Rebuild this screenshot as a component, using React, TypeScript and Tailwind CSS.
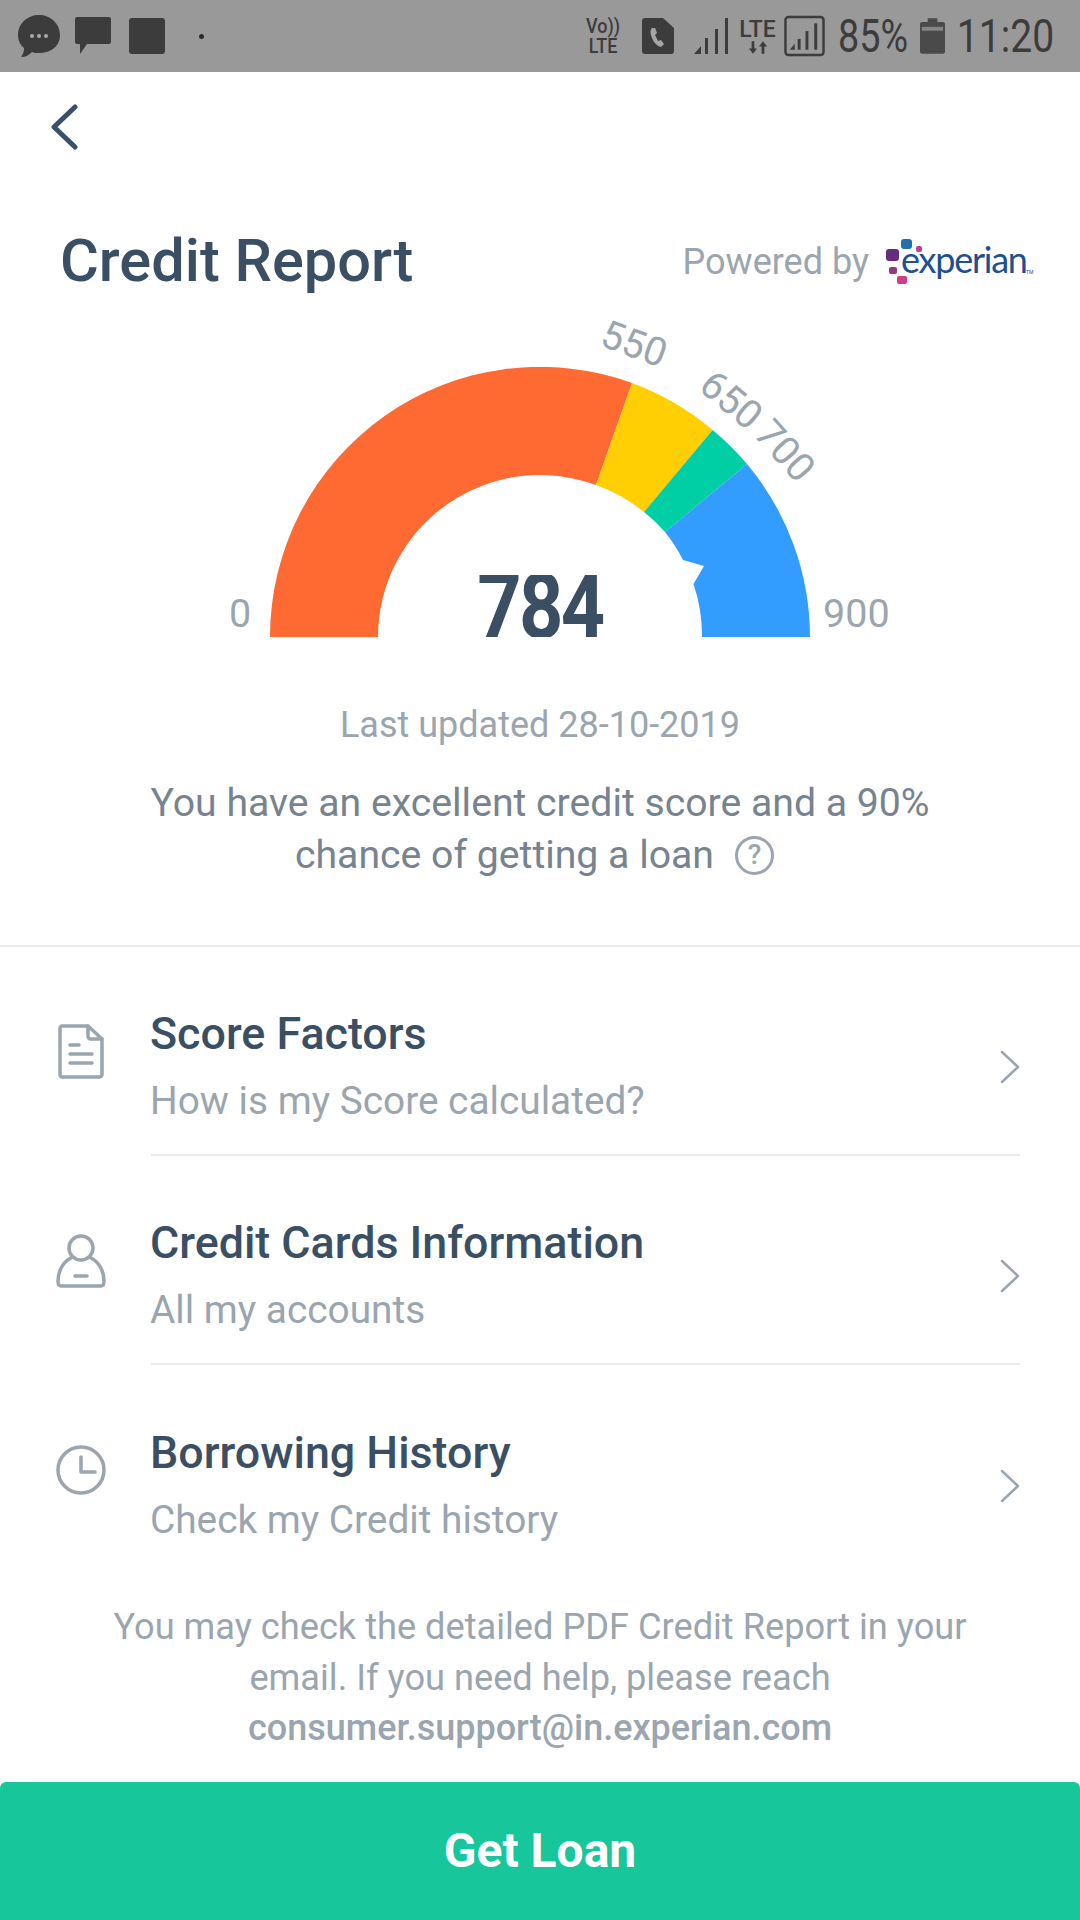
function StatusBar() {
  return (
    <div className="flex h-[72px] shrink-0 items-center justify-between bg-[#999999] pl-[18px] pr-[26px] text-[#3c3c3c]">
      <div className="flex items-center">
        <svg width="42" height="42" viewBox="0 0 42 42" fill="#3c3c3c">
          <path d="M21 0C32 0 42 8 42 20C42 32 32 38 21 38C18 38 16 38 14 37C11 40 8 42 3 42C5 39 6 37 6 33C2 30 0 25 0 20C0 8 10 0 21 0Z" />
          <circle cx="14" cy="21" r="2" fill="#aaaaaa" />
          <circle cx="21" cy="21" r="2" fill="#aaaaaa" />
          <circle cx="28" cy="21" r="2" fill="#aaaaaa" />
        </svg>
        <svg className="ml-[15px]" width="36" height="38" viewBox="0 0 36 38" fill="#3c3c3c">
          <path d="M2 0H34C35 0 36 1 36 2V25C36 26 35 27 34 27H12L5 37V27H2C1 27 0 26 0 25V2C0 1 1 0 2 0Z" />
        </svg>
        <div className="ml-[18px] h-[36px] w-[36px] rounded-[3px] bg-[#3c3c3c]" />
        <div className="ml-[34px] h-[5px] w-[5px] rounded-full bg-[#2c2c2c]" />
      </div>
      <div className="flex items-center">
        <div className="flex w-[36px] scale-x-[.9] flex-col items-center text-[20px] font-medium leading-[20px]">
          <span>Vo))</span>
          <span>LTE</span>
        </div>
        <svg className="ml-[21px]" width="32" height="36" viewBox="0 0 32 36">
          <path d="M3 0H21L32 10V33C32 35 31 36 29 36H3C1 36 0 35 0 33V3C0 1 1 0 3 0Z" fill="#3c3c3c" />
          <path d="M10 10C8 12 8 15 10 20C12 25 15 28 19 29L22 26L19 22L16 23C15 21 14 19 13 17L15 15L13 10Z" fill="#a5a5a5" />
        </svg>
        <svg className="ml-[20px]" width="35" height="36" viewBox="0 0 35 36" fill="#3c3c3c">
          <path d="M0 36L7 28V36Z" />
          <rect x="11" y="20" width="3" height="16" />
          <rect x="21" y="11" width="3" height="25" />
          <rect x="31" y="0" width="3" height="36" />
        </svg>
        <div className="ml-[10px] flex w-[37px] flex-col items-center">
          <span className="text-[23px] font-medium leading-[22px]">LTE</span>
          <svg width="20" height="13" viewBox="0 0 22 14" fill="#3c3c3c">
            <path d="M4 0H7V8H10L5.5 14L1 8H4Z" />
            <path d="M15 14H18V6H21L16.5 0L12 6H15Z" />
          </svg>
        </div>
        <svg className="ml-[8px]" width="41" height="42" viewBox="0 0 42 42">
          <rect x="1.5" y="1.5" width="39" height="39" rx="3" fill="none" stroke="#3c3c3c" strokeWidth="2.5" />
          <g fill="#3c3c3c">
            <path d="M6 35L11 29V35Z" />
            <rect x="14" y="24" width="3" height="11" />
            <rect x="22" y="16" width="3" height="19" />
            <rect x="31" y="8" width="3" height="27" />
          </g>
        </svg>
        <span className="ml-[13px] flex w-[70px] scale-x-[.82] justify-center whitespace-nowrap text-[46px] leading-none">85%</span>
        <svg className="ml-[12px]" width="25" height="36" viewBox="0 0 26 37" fill="#4a4a4a">
          <path d="M8 0H18V4H24C25 4 26 5 26 6V35C26 36 25 37 24 37H2C1 37 0 36 0 35V6C0 5 1 4 2 4H8Z" />
          <rect x="2" y="9" width="22" height="4" fill="#858585" />
        </svg>
        <span className="ml-[12px] flex w-[97px] scale-x-[.85] justify-center whitespace-nowrap text-[46px] leading-none">11:20</span>
      </div>
    </div>
  );
}

function Gauge() {
  return (
    <div className="relative flex h-[338px] shrink-0 items-end justify-center">
      <svg className="mb-[3px]" width="540" height="270" viewBox="0 0 540 270">
        <path d="M0 270A270 270 0 0 1 362 16L326 118A162 162 0 0 0 108 270Z" fill="#ff6a33" />
        <path d="M362 16A270 270 0 0 1 442.6 63L374 145A162 162 0 0 0 326 118Z" fill="#ffcf03" />
        <path d="M442.6 63A270 270 0 0 1 477 97L395 165A162 162 0 0 0 374 145Z" fill="#00cfa5" />
        <path d="M477 97A270 270 0 0 1 540 270H432A162 162 0 0 0 423.5 217L434 199L413 193A162 162 0 0 0 395 165Z" fill="#339cff" />
      </svg>
      <span className="absolute left-[229px] top-[287px] text-[39.5px] leading-[50px] text-[#9aa5af]">0</span>
      <span className="absolute left-[823px] top-[287px] text-[39.5px] leading-[50px] text-[#9aa5af]">900</span>
      <span className="absolute left-[634px] top-[42px] -translate-x-1/2 -translate-y-1/2 rotate-[20deg] text-[39.5px] leading-none text-[#9aa5af]">550</span>
      <span className="absolute left-[731px] top-[98px] -translate-x-1/2 -translate-y-1/2 rotate-[40deg] text-[39.5px] leading-none text-[#9aa5af]">650</span>
      <span className="absolute left-[785px] top-[149px] -translate-x-1/2 -translate-y-1/2 rotate-[48deg] text-[39.5px] leading-none text-[#9aa5af]">700</span>
      <div className="absolute bottom-[3px] left-1/2 flex h-[62px] w-[160px] -translate-x-1/2 justify-center overflow-hidden">
        <span className="mt-[-17px] scale-x-[.86] whitespace-nowrap text-[90px] font-bold leading-[100px] tracking-[-3px] text-[#3a4f63]">784</span>
      </div>
    </div>
  );
}

function DocIcon() {
  return (
    <svg width="46" height="55" viewBox="0 0 46 55" fill="none" stroke="#9aa5af" strokeWidth="3.5" strokeLinecap="round" strokeLinejoin="round">
      <path d="M4 2H30L44 15V50C44 52 43 53 41 53H4C3 53 2 52 2 50V4C2 3 3 2 4 2Z" />
      <path d="M30 2V12C30 14 31 15 33 15H44" />
      <path d="M12 21H21M12 30H34M12 39H34" />
    </svg>
  );
}

function PersonIcon() {
  return (
    <svg width="50" height="54" viewBox="0 0 50 54" fill="none" stroke="#9aa5af" strokeWidth="3.5" strokeLinecap="round" strokeLinejoin="round">
      <circle cx="25" cy="14" r="12" />
      <path d="M15 24C7 28 2 37 2 47C2 50 3 52 5 52H45C47 52 48 50 48 47C48 37 43 28 35 24" />
      <path d="M19 42H31" />
    </svg>
  );
}

function ClockIcon() {
  return (
    <svg width="50" height="50" viewBox="0 0 50 50" fill="none" stroke="#9aa5af" strokeWidth="3.5" strokeLinecap="round" strokeLinejoin="round">
      <circle cx="25" cy="25" r="23" />
      <path d="M25 12V27H39" />
    </svg>
  );
}

function Row({ icon, title, subtitle, last }: { icon: React.ReactNode; title: string; subtitle: string; last?: boolean }) {
  return (
    <div className="flex h-[209px] pl-[56px] pr-[60px]">
      <div className="mr-[45px] flex w-[50px] shrink-0 items-center justify-center">{icon}</div>
      <div className={last ? "flex flex-1 items-center justify-between pt-[33px]" : "flex flex-1 items-center justify-between border-b-2 border-[#e8ecef] pt-[33px]"}>
        <div className="ml-[-1px]">
          <div className="text-[44.8px] font-medium leading-[50px] text-[#3a4f63]">{title}</div>
          <div className="mt-[17px] text-[38.8px] leading-[50px] text-[#9aa5af]">{subtitle}</div>
        </div>
        <svg width="20" height="34" viewBox="0 0 20 34" fill="none" stroke="#9aa5af" strokeWidth="2.5" strokeLinecap="round" strokeLinejoin="round">
          <path d="M2 2L18 17L2 32" />
        </svg>
      </div>
    </div>
  );
}

export default function App() {
  return (
    <div className="flex h-[1920px] w-[1080px] flex-col overflow-hidden bg-white font-[Roboto,sans-serif]">
      <StatusBar />
      <div className="pl-[51px] pt-[32px]">
        <svg width="27" height="46" viewBox="0 0 27 46" fill="none" stroke="#3a5068" strokeWidth="5" strokeLinecap="round" strokeLinejoin="round">
          <path d="M24 3L3 23L24 43" />
        </svg>
      </div>
      <div className="mt-[72px] flex h-[80px] shrink-0 items-center justify-between pl-[60px] pr-[48px]">
        <h1 className="text-[59.5px] font-medium leading-none text-[#3a4f63]">Credit Report</h1>
        <div className="flex items-center">
          <span className="text-[36px] leading-none text-[#9aa5af]">Powered by</span>
          <div className="relative ml-[15px] h-[50px] w-[148px]">
            <div className="absolute left-[2px] top-[12px] h-[12px] w-[13px] rounded-[3px] bg-[#662d7f]" />
            <div className="absolute left-[17px] top-[2px] h-[10px] w-[11px] rounded-[3px] bg-[#2170ae]" />
            <div className="absolute left-[32px] top-[9px] h-[6px] w-[6px] rounded-[2px] bg-[#c63d87]" />
            <div className="absolute left-[5px] top-[30px] h-[7px] w-[8px] rounded-[2px] bg-[#96397f]" />
            <div className="absolute left-[13px] top-[39px] h-[8px] w-[10px] rounded-[2px] bg-[#cf3f85]" />
            <span className="absolute left-[17px] top-[0px] font-[Lato,sans-serif] text-[36px] font-normal leading-[44px] tracking-[-1.25px] text-[#1d4f91]">experian</span>
            <span className="absolute left-[142px] top-[33px] text-[5px] leading-none text-[#1d4f91]">TM</span>
          </div>
        </div>
      </div>
      <Gauge />
      <div className="mt-[62px] text-center text-[36px] leading-[46px] text-[#9aa5af]">Last updated 28-10-2019</div>
      <div className="mt-[29px] text-center text-[39.2px] leading-[52px] text-[#77838f]">
        <div>You have an excellent credit score and a 90%</div>
        <div className="flex items-center justify-center pr-[11px]">
          chance of getting a loan
          <span className="ml-[21px] flex h-[39px] w-[39px] items-center justify-center rounded-full border-[3px] border-[#9aa5af] text-[28px] font-medium leading-none text-[#9aa5af]">?</span>
        </div>
      </div>
      <div className="mt-[64px] h-[2px] shrink-0 bg-[#e8ecef]" />
      <Row icon={<DocIcon />} title="Score Factors" subtitle="How is my Score calculated?" />
      <Row icon={<PersonIcon />} title="Credit Cards Information" subtitle="All my accounts" />
      <Row icon={<ClockIcon />} title="Borrowing History" subtitle="Check my Credit history" last />
      <div className="pt-[28px] text-center text-[36.2px] leading-[50.5px] text-[#9aa5af]">
        <div>You may check the detailed PDF Credit Report in your</div>
        <div>email. If you need help, please reach</div>
        <div className="text-[36px] font-medium">consumer.support@in.experian.com</div>
      </div>
      <div className="mt-auto flex h-[138px] shrink-0 items-center justify-center rounded-t-[6px] bg-[#17c69b] text-[48px] font-bold text-white">Get Loan</div>
    </div>
  );
}
